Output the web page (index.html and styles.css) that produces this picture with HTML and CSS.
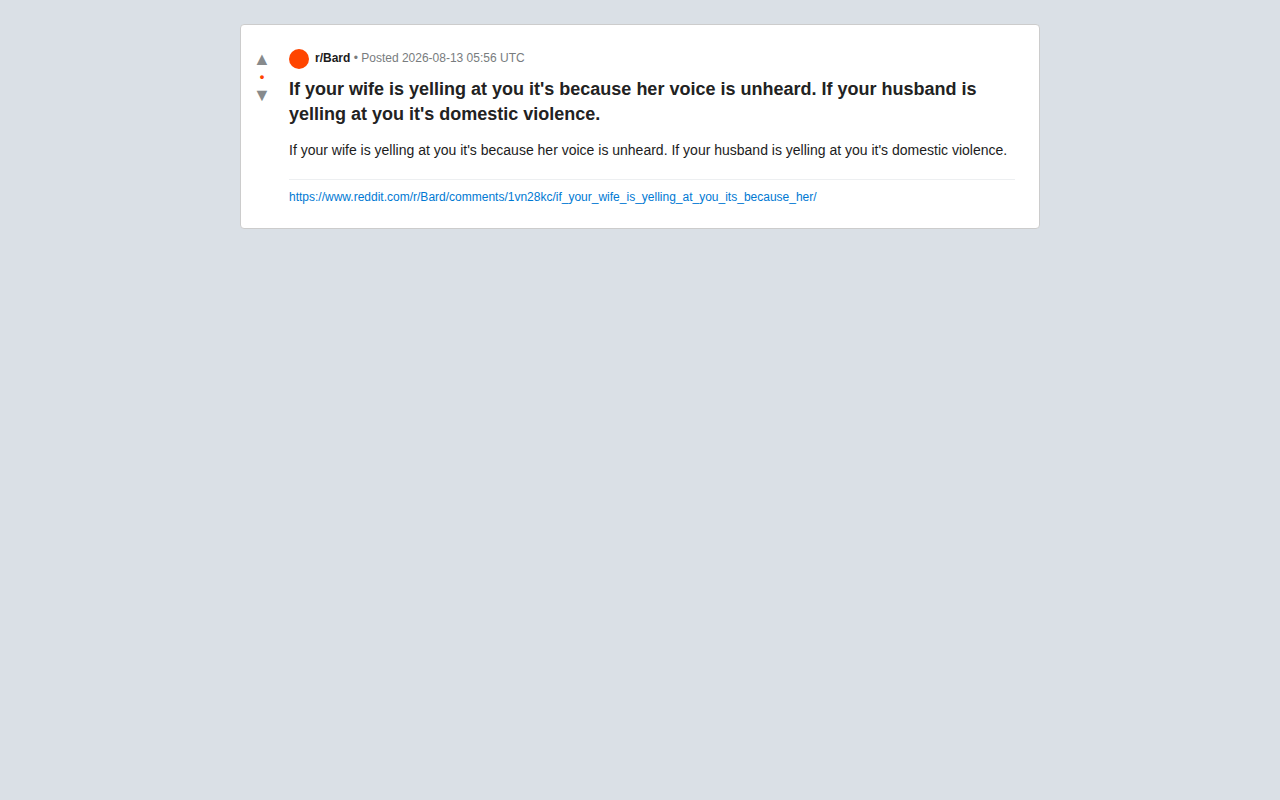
FILE: index.html
```html
<!DOCTYPE html>
<html lang="en">
<head>
  <meta charset="UTF-8">
  <meta name="viewport" content="width=device-width, initial-scale=1.0">
  <title>r/Bard</title>
  <link rel="stylesheet" href="styles.css">
</head>
<body>

  <article class="post">
    <div class="votes">
      <button class="vote" type="button" aria-label="Upvote">▲</button>
      <span class="score">•</span>
      <button class="vote" type="button" aria-label="Downvote">▼</button>
    </div>

    <div class="content">
      <div class="meta">
        <span class="avatar"></span>
        <div><strong class="sub">r/Bard</strong> • Posted 2026-08-13 05:56 UTC</div>
      </div>
      <h1 class="title">If your wife is yelling at you it's because her voice is unheard. If your husband is yelling at you it's domestic violence.</h1>
      <p class="text">If your wife is yelling at you it's because her voice is unheard. If your husband is yelling at you it's domestic violence.</p>
      <div class="footer">
        <a href="https://www.reddit.com/r/Bard/comments/1vn28kc/if_your_wife_is_yelling_at_you_its_because_her/">https://www.reddit.com/r/Bard/comments/1vn28kc/if_your_wife_is_yelling_at_you_its_because_her/</a>
      </div>
    </div>
  </article>

</body>
</html>
```
FILE: styles.css
```css
* {
  box-sizing: border-box;
}
body {
  margin: 0;
  padding: 24px;
  background: #dae0e6;
  color: #1c1c1c;
  font-family: "Liberation Sans", Arial, sans-serif;
  font-size: 14px;
}
.post {
  display: flex;
  max-width: 800px;
  margin: 0 auto;
  padding: 24px 24px 24px 8px;
  gap: 14px;
  background: #fff;
  border: 1px solid #ccc;
  border-radius: 4px;
}
.votes {
  display: flex;
  flex-direction: column;
  align-items: center;
  width: 26px;
}
.vote {
  padding: 0;
  border: none;
  background: none;
  color: #878a8c;
  font-family: inherit;
  font-size: 18px;
  line-height: 20px;
  cursor: pointer;
}
.score {
  color: #ff4500;
  font-size: 13px;
  font-weight: bold;
  line-height: 16px;
}
.content {
  flex: 1;
  min-width: 0;
}
.meta {
  display: flex;
  gap: 6px;
  margin-bottom: 8px;
  color: #787c7e;
  font-size: 12px;
  line-height: 18px;
}
.avatar {
  width: 20px;
  height: 20px;
  border-radius: 50%;
  background: #ff4500;
}
.sub {
  color: #1c1c1c;
}
.title {
  margin: 0 0 12px;
  font-size: 18px;
  line-height: 25px;
  color: #222;
}
.text {
  margin: 0 0 18px;
  line-height: 22px;
}
.footer {
  padding-top: 10px;
  border-top: 1px solid #edeff1;
  font-size: 12px;
  line-height: 14px;
}
.footer a {
  color: #0079d3;
  text-decoration: none;
}
```
